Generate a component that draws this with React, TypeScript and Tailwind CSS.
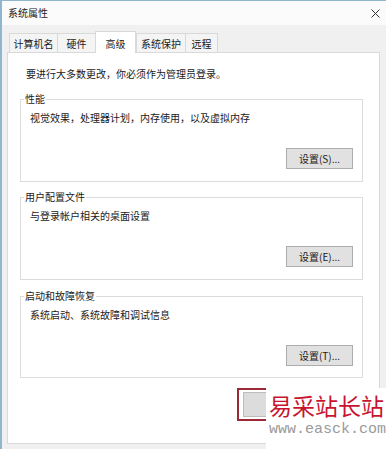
import React from "react";

const tabs = [
  { label: "计算机名", w: "w-[48px]" },
  { label: "硬件", w: "w-[38px]" },
  { label: "高级", w: "w-[41px]", active: true },
  { label: "系统保护", w: "w-[49px]" },
  { label: "远程", w: "w-[33px]" },
];

const groups = [
  {
    title: "性能",
    desc: "视觉效果，处理器计划，内存使用，以及虚拟内存",
    button: "设置(S)...",
    h: "h-[83px]",
    mt: "mt-[18px]",
  },
  {
    title: "用户配置文件",
    desc: "与登录帐户相关的桌面设置",
    button: "设置(E)...",
    h: "h-[83px]",
    mt: "mt-[15px]",
  },
  {
    title: "启动和故障恢复",
    desc: "系统启动、系统故障和调试信息",
    button: "设置(T)...",
    h: "h-[82px]",
    mt: "mt-[16px]",
  },
];

function WinButton({ children, className = "" }: { children?: React.ReactNode; className?: string }) {
  return (
    <button
      type="button"
      className={
        "h-[21px] w-[67px] border border-[#adadad] bg-[#e1e1e1] text-[10px] leading-[19px] text-[#1a1a1a] " +
        className
      }
    >
      {children}
    </button>
  );
}

export default function App() {
  return (
    <div
      className="relative w-[386px] h-[449px] overflow-hidden bg-[#f0f0f0] border-l-2 border-t border-[#8fb5cf] text-[#1a1a1a]"
      style={{ fontFamily: '"Noto Sans CJK SC", "Noto Sans", sans-serif' }}
    >
      {/* title bar */}
      <div className="flex h-[24px] items-center justify-between bg-[#fbfbfb] pl-[6px] pr-[5px]">
        <span className="text-[10px] leading-[14px] text-[#222]">系统属性</span>
        <svg width="9" height="9" viewBox="0 0 9 9" className="mr-[1px]">
          <path d="M0.5 0.5 L8.5 8.5 M8.5 0.5 L0.5 8.5" stroke="#333" strokeWidth="1" fill="none" />
        </svg>
      </div>

      {/* tabs */}
      <div className="flex items-end h-[21px] mt-[6px] ml-[7px]">
        {tabs.map((t) =>
          t.active ? (
            <div
              key={t.label}
              className={
                "relative z-10 -mb-px h-[22px] border border-b-0 border-[#d9d9d9] bg-white pt-[5px] text-center text-[10px] leading-[14px] " +
                t.w
              }
            >
              {t.label}
            </div>
          ) : (
            <div
              key={t.label}
              className={
                "h-[19px] border border-b-0 border-r-0 border-[#d9d9d9] bg-[#f4f4f4] pt-[3px] text-center text-[10px] leading-[14px] last:border-r " +
                t.w
              }
            >
              {t.label}
            </div>
          )
        )}
      </div>

      {/* panel */}
      <div className="ml-[5px] w-[373px] h-[392px] border border-[#d9d9d9] bg-white pl-[12px]">
        <p className="mt-[14px] pl-[6px] text-[10px] leading-[14px]">要进行大多数更改，你必须作为管理员登录。</p>

        {groups.map((g) => (
          <div
            key={g.title}
            className={"relative flex w-[343px] flex-col border border-[#dcdcdc] pt-[11px] pl-[9px] pr-[9px] " + g.h + " " + g.mt}
          >
            <span className="absolute -top-[8px] left-[3px] bg-white px-[1px] text-[10px] leading-[14px]">
              {g.title}
            </span>
            <p className="text-[10px] leading-[14px]">{g.desc}</p>
            <WinButton className="mt-[23px] self-end">{g.button}</WinButton>
          </div>
        ))}

        <div className="mt-[10px] ml-[217px] flex h-[33px] w-[121px] items-center justify-center border-2 border-[#9b2a36]">
          <button
            type="button"
            className="h-[25px] w-[109px] border border-[#bdbdbd] bg-[#dcdcdc] text-[10px] text-[#1a1a1a]"
          >
            <span className="pl-[30px]">环境变量(N)...</span>
          </button>
        </div>
      </div>

      {/* watermark over the screenshot */}
      <div className="absolute left-[264px] top-[387px] h-[62px] w-[122px] bg-white pl-[3px]">
        <div className="mt-[4px] whitespace-nowrap text-[23px] leading-[26px] text-[#c8142f]">易采站长站</div>
        <div
          className="mt-[4px] whitespace-nowrap text-[15px] leading-[16px] text-[#9a9a9a]"
          style={{ fontFamily: '"Liberation Mono", monospace' }}
        >
          www.easck.com
        </div>
      </div>
    </div>
  );
}
